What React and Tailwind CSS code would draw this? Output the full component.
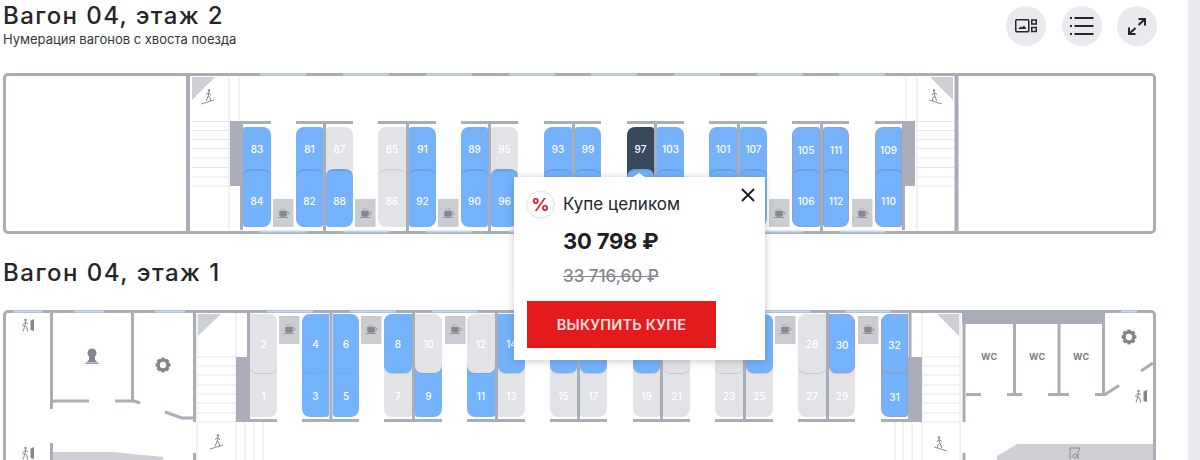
const BLUE = "bg-[#74b2fc]";
const GREY = "bg-[#e2e3e7]";

const upper = [
  [243, 271, "l", ["83", "b"], ["84", "b"]],
  [296, 323, "r", ["81", "b"], ["82", "b"]],
  [326, 353, "l", ["87", "g"], ["88", "b"]],
  [378, 406, "r", ["85", "g"], ["86", "g"]],
  [409, 436, "l", ["91", "b"], ["92", "b"]],
  [461, 488, "r", ["89", "b"], ["90", "b"]],
  [491, 518, "l", ["95", "g"], ["96", "b"]],
  [544, 572, "r", ["93", "b"], ["", "b"]],
  [575, 601, "l", ["99", "b"], ["", "b"]],
  [627, 654, "r", ["97", "d"], ["", "b"]],
  [657, 684, "l", ["103", "b"], ["", "b"]],
  [709, 737, "r", ["101", "b"], ["", "b"]],
  [740, 767, "l", ["107", "b"], ["", "b"]],
  [792, 820, "r", ["105", "p"], ["106", "p"]],
  [823, 849, "l", ["111", "p"], ["112", "p"]],
  [875, 902, "r", ["109", "p"], ["110", "p"]],
];

const lower = [
  [250, 277, "l", ["2", "g"], ["1", "g"]],
  [302, 329, "r", ["4", "b"], ["3", "b"]],
  [333, 359, "l", ["6", "b"], ["5", "b"]],
  [384, 412, "r", ["8", "b"], ["7", "g"]],
  [415, 442, "l", ["10", "g"], ["9", "b"]],
  [467, 495, "r", ["12", "g"], ["11", "b"]],
  [498, 525, "l", ["14", "b"], ["13", "g"]],
  [550, 577, "r", ["", "b"], ["15", "g"]],
  [580, 607, "l", ["", "b"], ["17", "g"]],
  [633, 660, "r", ["", "b"], ["19", "g"]],
  [663, 690, "l", ["", "g"], ["21", "g"]],
  [715, 743, "r", ["", "g"], ["23", "g"]],
  [746, 773, "l", ["", "b"], ["25", "g"]],
  [798, 826, "r", ["28", "g"], ["27", "g"]],
  [829, 855, "l", ["30", "p"], ["29", "g"]],
  [881, 908, "r", ["32", "p"], ["31", "p"]],
];

const tone = {
  b: `${BLUE} text-white`,
  g: `${GREY} text-white`,
  d: "bg-[#37495c] text-white",
  p: `${BLUE} text-white border border-[#9a9ccb]`,
};

function Seat({ x, y, w, h, kind, label, cls, labelY, ox, oy }) {
  return (
    <div
      className={`absolute flex justify-center text-[10px] font-medium leading-none ${tone[kind]} ${cls}`}
      style={{ left: x - ox, top: y - oy, width: w, height: h, paddingTop: labelY - y - 5 }}
    >
      {label}
    </div>
  );
}

function Cup({ x, y }) {
  return (
    <g stroke="#85888f" fill="none" transform={`translate(${x} ${y})`}>
      <path d="M-3.5 -2h7v4a1.5 1.5 0 0 1-1.5 1.5h-4a1.5 1.5 0 0 1-1.5-1.5z" fill="#85888f" strokeWidth="0.5" />
      <path d="M3.5 -1h1.2a1 1 0 0 1 0 2.6h-1.2" strokeWidth="0.7" />
      <path d="M-5 4.5h10" strokeWidth="0.8" />
      <path d="M-1.5 -5c-.6 1 .6 1 0 2M1 -5c-.6 1 .6 1 0 2" strokeWidth="0.5" />
    </g>
  );
}

function Walker({ x, y, flip }) {
  return (
    <g transform={`translate(${x} ${y}) scale(${flip ? -1 : 1} 1)`} stroke="#82858e" fill="none">
      <circle cx="1" cy="-7.5" r="1.2" fill="#82858e" stroke="none" />
      <path d="M1 -6l-.8 4 2 2 .3 3M.2 -2l-2 5M1 -5l2 2M.5 -5.5l-2.5 2" strokeWidth="1" />
      <path d="M-7 6l13 -4" strokeWidth="0.9" />
    </g>
  );
}

function ExitPerson({ x, y }) {
  return (
    <g transform={`translate(${x} ${y})`} stroke="#82858e" fill="none">
      <circle cx="-3.5" cy="-6" r="1.2" fill="#82858e" stroke="none" />
      <path d="M-3.5 -4.5l-.5 4 2 2 .5 4M-4 -.5l-2 6M-3.5 -4l-2.5 2.5v2M-3.5 -4l2.5 2" strokeWidth="1" />
      <path d="M1.5 -5.5l3.5 -1.5v12l-3.5 -1z" fill="#82858e" stroke="none" />
    </g>
  );
}

function Gear({ x, y }) {
  return (
    <g transform={`translate(${x} ${y})`}>
      <circle r="4.8" fill="none" stroke="#82858e" strokeWidth="3.2" />
      {[0, 45, 90, 135, 180, 225, 270, 315].map((a) => (
        <rect key={a} x="-1.7" y="-7.4" width="3.4" height="3" fill="#82858e" transform={`rotate(${a})`} />
      ))}
    </g>
  );
}

function Stairs({ x1, x2, ys }) {
  return ys.map((y) => <path key={y} d={`M${x1} ${y}H${x2}`} stroke="#e6e7ea" strokeWidth="1" />);
}

const WALL = "#a9adb8";
const LINE = "#e3e4e8";
const DARK = "#abaeb9";
const TRI = "#cdcfd4";
const WIN = "#c3d7ec";

function Wall({ d, w = 3 }) {
  return <path d={d} stroke={WALL} strokeWidth={w} fill="none" />;
}

function UpperDrawing() {
  const stairsY = [121.5, 130.5, 139.5, 148.5, 158, 167.5, 177, 186];
  const pairs = [[243, 271], [296, 353], [378, 436], [461, 518], [544, 601], [627, 684], [709, 767], [792, 849], [875, 902]];
  const dividers = [324.5, 407.5, 489.5, 573.5, 655.5, 738.5, 821.5];
  return (
    <svg className="absolute left-0 top-0 overflow-visible" width="1147" height="154" viewBox="6 76 1147 154">
      {[260, 343, 426, 509, 591, 674, 757, 839].flatMap((x) => [
        <path key={`t${x}`} d={`M${x} 74.5h46`} stroke={WIN} strokeWidth="2" />,
        <path key={`b${x}`} d={`M${x} 231.5h46`} stroke={WIN} strokeWidth="2" />,
      ])}
      <path d="M188 76V231M956.5 76V231" stroke={WALL} strokeWidth="4" />
      <path d="M192 77H215L192 100Z M953 77H930L953 100Z" fill={TRI} />
      <Walker x={208} y={98} />
      <Walker x={935} y={98} flip />
      <Stairs x1={191} x2={229} ys={stairsY} />
      <Stairs x1={917} x2={954} ys={stairsY} />
      <path d="M229 77V230M239 77V121M917 77V230M906 77V121" stroke={LINE} />
      <rect x="230" y="121" width="13" height="65" fill={DARK} />
      <rect x="902" y="121" width="13" height="65" fill={DARK} />
      <path d="M241.5 186V230M903.5 186V230" stroke={WALL} strokeWidth="3" />
      {pairs.map(([a, b]) => (
        <Wall key={a} d={`M${a} 122.5H${b}`} />
      ))}
      {dividers.map((x) => (
        <Wall key={x} d={`M${x} 121V231`} />
      ))}
    </svg>
  );
}

function UpperCups() {
  return (
    <svg className="absolute left-0 top-0 overflow-visible" width="1147" height="154" viewBox="6 76 1147 154">
      {[273, 355, 438, 769, 852].map((x) => (
        <g key={x}>
          <rect x={x} y="199" width="20.5" height="28" fill="#cbccd1" />
          <Cup x={x + 10} y={213} />
        </g>
      ))}
    </svg>
  );
}

function LowerDrawing() {
  const stairsL = [357, 366, 375, 385, 394, 403, 413, 422];
  const pairs = [[250, 277], [302, 359], [384, 442], [467, 525], [550, 607], [633, 690], [715, 773], [798, 855], [881, 908]];
  const dividers = [331, 413.5, 496.5, 578.5, 661.5, 744.5, 827.5];
  return (
    <svg className="absolute left-0 top-0 overflow-visible" width="1147" height="160" viewBox="6 313 1147 160">
      {[13, 74, 155, 267, 350, 432, 515, 598, 681, 764, 845].map((x, i) => (
        <path key={x} d={`M${x} 311.5h${i < 3 ? 30 : 46}`} stroke={WIN} strokeWidth="2" />
      ))}
      <path d="M1121 311.5h16" stroke={WIN} strokeWidth="2" />

      <ExitPerson x={29} y={326} />
      <ExitPerson x={29} y={454} />
      <path d="M51.5 313V409M51.5 443V473M132.5 313V401M53 401H89M115 401H134L140 403M165 412L182 418H193M194.5 313V422M194.5 453V473" stroke={WALL} strokeWidth="3" fill="none" />
      <path d="M53 452H113L163 457V473H53Z" fill={TRI} />
      <g transform="translate(92 357)" fill="#82858e">
        <circle cy="-4" r="4.5" />
        <path d="M-3 0h6v3l3 2.5h-12l3-2.5z" />
        <path d="M-7 6.5h14" stroke="#82858e" strokeWidth="0.8" />
      </g>
      <Gear x={163} y={365} />

      <path d="M198 314H221L198 336Z M959 314H937L959 336Z" fill={TRI} />
      <Stairs x1={197} x2={236} ys={stairsL} />
      <Stairs x1={922} x2={960} ys={stairsL} />
      <path d="M197 313V473M236 313V473M245 422V473M254 422V473M263 422V473M922 313V473M960 313V473M895 422V473M903 422V473M912 422V473" stroke={LINE} />
      <Walker x={217} y={443} />
      <Walker x={940} y={445} flip />
      <rect x="236" y="357" width="14" height="65" fill={DARK} />
      <rect x="908" y="357" width="14" height="65" fill={DARK} />
      <path d="M248.5 313V358M910 313V358" stroke={WALL} strokeWidth="3" />

      {pairs.map(([a, b]) => (
        <Wall key={a} d={`M${a} 420.5H${b}`} />
      ))}
      {dividers.map((x) => (
        <Wall key={x} d={`M${x} 313V422`} />
      ))}

      <rect x="962" y="313" width="143" height="11" fill={DARK} />
      <path d="M964 313V422M964 453V473M1014.5 324V395M1059 324V395M1103.5 324V395M966 394.5H981M1007 394.5H1022M1048 394.5H1069M1095 394.5H1105L1119 385.5M1141 371L1153 363" stroke={WALL} strokeWidth="3" fill="none" />
      <Gear x={1129} y={337} />
      <ExitPerson x={1142} y={397} />
      <path d="M1017 444H1153V473H997V456Z" fill={TRI} />
      <g transform="translate(1075 454)" stroke="#8a8d96" fill="none" strokeWidth="1">
        <path d="M-5 5V-6H5L3 -2V5" />
        <circle cx="0" cy="2" r="2" />
      </g>
    </svg>
  );
}

function LowerCups() {
  return (
    <svg className="absolute left-0 top-0 overflow-visible" width="1147" height="160" viewBox="6 313 1147 160">
      {[279, 361, 445, 775, 858].map((x) => (
        <g key={x}>
          <rect x={x} y="316" width="20.5" height="28" fill="#cbccd1" />
          <Cup x={x + 10} y={329} />
        </g>
      ))}
    </svg>
  );
}

function UpperSeats() {
  return upper.map(([a, b, side, top, bottom]) => {
    const outer = side === "l" ? "rounded-tr-[8px] rounded-tl-[3px]" : "rounded-tl-[8px] rounded-tr-[3px]";
    const outerB = side === "l" ? "rounded-tr-[8px] rounded-br-[8px] rounded-tl-[7px] rounded-bl-[3px]" : "rounded-tl-[8px] rounded-bl-[8px] rounded-tr-[7px] rounded-br-[3px]";
    const rim = bottom[1] === "g" ? "border-t-[#d4d5da]" : "border-t-[#6f9fde]";
    return [
      <Seat key={`t${a}`} x={a} y={127} w={b - a} h={50} kind={top[1]} label={top[0]} labelY={149} cls={outer} ox={6} oy={76} />,
      <Seat key={`b${a}`} x={a} y={169} w={b - a} h={58} kind={bottom[1]} label={bottom[0]} labelY={199} ox={6} oy={76} cls={`${outerB} border-t-2 ${rim}`} />,
    ];
  });
}

function LowerSeats() {
  return lower.map(([a, b, side, top, bottom]) => {
    const outerBottom = side === "l" ? "rounded-br-[8px] rounded-bl-[3px]" : "rounded-bl-[8px] rounded-br-[3px]";
    const outerTop = side === "l" ? "rounded-tr-[8px] rounded-br-[8px] rounded-bl-[7px]" : "rounded-tl-[8px] rounded-bl-[8px] rounded-br-[7px]";
    return [
      <Seat key={`b${a}`} x={a} y={360} w={b - a} h={57} kind={bottom[1]} label={bottom[0]} labelY={396} cls={outerBottom} ox={6} oy={313} />,
      <Seat key={`t${a}`} x={a} y={314} w={b - a} h={59} kind={top[1]} label={top[0]} labelY={344} ox={6} oy={313} cls={`${outerTop} shadow-[0_1px_0_rgba(130,140,170,0.3)]`} />,
    ];
  });
}

function WcLabels() {
  return [
    ["left-[975px]", "w1"],
    ["left-[1023px]", "w2"],
    ["left-[1067px]", "w3"],
  ].map(([pos, k]) => (
    <span key={k} className={`absolute top-[39px] text-[9px] font-bold leading-none tracking-[0.5px] text-[#7b7e86] ${pos}`}>
      WC
    </span>
  ));
}

function IconButton({ children }) {
  return (
    <button className="flex h-10 w-10 items-center justify-center rounded-full bg-[#e9eaee] text-[#25272b]">
      {children}
    </button>
  );
}

const scallop = Array.from({ length: 28 }, (_, i) => {
  const a = (i / 28) * Math.PI * 2;
  const r = i % 2 === 0 ? 14 : 13;
  return `${(14.5 + r * Math.cos(a)).toFixed(2)},${(14.5 + r * Math.sin(a)).toFixed(2)}`;
}).join(" ");

function Popup() {
  return (
    <div className="absolute left-[514px] top-[177px] h-[183px] w-[251px] bg-white shadow-[0_1px_8px_rgba(60,70,90,0.3)]">
      <div className="absolute left-[119px] top-[-4px] h-0 w-0 border-x-[6px] border-b-[4px] border-x-transparent border-b-white" />
      <svg className="absolute right-[10px] top-[11px]" width="14" height="14" viewBox="0 0 14 14">
        <path d="M1 1L13 13M13 1L1 13" stroke="#1c1d20" strokeWidth="1.9" />
      </svg>
      <div className="flex h-full flex-col pl-[12px] pt-[13px]">
        <div className="flex items-center">
          <div className="relative flex h-[29px] w-[29px] items-center justify-center text-[18px] font-bold leading-none text-[#c9252c]">
            <svg className="absolute inset-0" width="29" height="29" viewBox="0 0 29 29">
              <polygon points={scallop} fill="#fff" stroke="#d5d6da" strokeWidth="0.8" />
            </svg>
            <span className="relative">%</span>
          </div>
          <span className="ml-[8px] text-[17px] font-normal leading-none text-[#24262a]">Купе целиком</span>
        </div>
        <div className="ml-[37px] mt-[8px] text-[22px] font-bold leading-[28px] tracking-[-0.2px] text-[#1f2023]">30 798 ₽</div>
        <div className="ml-[37px] mt-[11px] text-[17px] font-medium leading-[20px] text-[#85888e] line-through">33 716,60 ₽</div>
        <button className="ml-[1px] mt-[15px] flex h-[47px] w-[189px] items-center justify-center bg-[#e31b1c] text-[14.5px] font-semibold tracking-[0.2px] text-white/85">
          ВЫКУПИТЬ КУПЕ
        </button>
      </div>
    </div>
  );
}

export default function App() {
  return (
    <div className="relative flex h-[460px] w-[1200px] overflow-hidden bg-white font-['Inter',sans-serif]">
      <main className="w-[1188px] pl-[3px] pr-[32px]">
        <header className="flex h-[73px] items-start justify-between">
          <div>
            <h1 className="pt-[1px] text-[24px] font-medium leading-[29px] tracking-[1.4px] text-[#24262a]">Вагон 04, этаж 2</h1>
            <p className="mt-[1px] text-[13px] leading-[16px] text-[#33353a]">Нумерация вагонов с хвоста поезда</p>
          </div>
          <div className="mr-[-1px] mt-[6px] flex gap-[15.5px]">
            <IconButton>
              <svg width="22" height="14" viewBox="0 0 22 14" fill="none" stroke="currentColor">
                <rect x="0.75" y="0.75" width="13" height="12" rx="1" strokeWidth="1.5" />
                <path d="M3 10l2.5-2.5 1.5 1 2-2 2.5 3.5z" fill="currentColor" stroke="none" />
                <rect x="16.75" y="1" width="4.5" height="4" strokeWidth="1.5" />
                <rect x="16.75" y="8.5" width="4.5" height="4" strokeWidth="1.5" />
              </svg>
            </IconButton>
            <IconButton>
              <svg width="24" height="18" viewBox="0 0 24 18" fill="none" stroke="currentColor" strokeWidth="2">
                <path d="M4.5 1h19M4.5 9h19M4.5 17h19" />
                <path d="M0 1h2M0 9h2M0 17h2" />
              </svg>
            </IconButton>
            <IconButton>
              <svg width="18" height="17" viewBox="0 0 18 17" fill="none" stroke="currentColor" strokeWidth="2">
                <path d="M10.5 1H17V7.5M17 1L10.5 7" />
                <path d="M1 9.5V16H7.5M1 16L7.5 10" />
              </svg>
            </IconButton>
          </div>
        </header>

        <section className="relative h-[161px] rounded-[5px] border-[3px] border-[#a9adb8]">
          <UpperCups />
          <UpperSeats />
          <UpperDrawing />
        </section>

        <div className="flex h-[76px] items-center pt-[1px]">
          <h2 className="text-[24px] font-medium leading-[29px] tracking-[1.5px] text-[#24262a]">Вагон 04, этаж 1</h2>
        </div>

        <section className="relative h-[200px] rounded-t-[5px] border-[3px] border-[#a9adb8]">
          <LowerCups />
          <LowerSeats />
          <LowerDrawing />
          <WcLabels />
        </section>
      </main>
      <aside className="w-[12px] bg-[#e9eaee]" />
      <Popup />
    </div>
  );
}
